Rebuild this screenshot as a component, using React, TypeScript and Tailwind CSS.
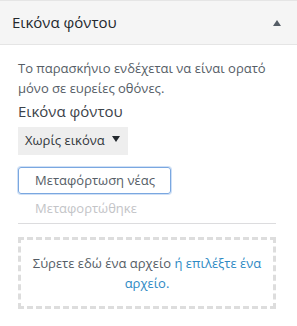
export default function App() {
  return (
    <div
      className="w-[297px] h-[326px] bg-white overflow-hidden"
      style={{ fontFamily: '"Open Sans", "Noto Sans", sans-serif' }}
    >
      <div className="flex items-center justify-between h-[45px] bg-[#f5f5f5] border-t border-b border-[#e5e5e5] pl-[12px] pr-[16px]">
        <span className="text-[15px] text-[#23282d]">Εικόνα φόντου</span>
        <span className="w-0 h-0 border-l-[4px] border-r-[4px] border-b-[6px] border-l-transparent border-r-transparent border-b-[#555d66]" />
      </div>

      <div className="px-[18px] pt-[13px] pr-[21px]">
        <p className="text-[13px] leading-[20px] text-[#555d66]">
          Το παρασκήνιο ενδέχεται να είναι ορατό μόνο σε ευρείες οθόνες.
        </p>
        <div className="mt-[2px] text-[15px] font-medium text-[#3c434a] leading-[22px]">
          Εικόνα φόντου
        </div>
        <div className="mt-[5px] flex items-center w-[110px] h-[28px] bg-[#eeeeee] pl-[7px] pr-[8px] justify-between">
          <span className="text-[13px] text-[#32373c]">Χωρίς εικόνα</span>
          <span className="w-0 h-0 border-l-[4px] border-r-[4px] border-t-[6px] border-l-transparent border-r-transparent border-t-[#23282d] mb-[4px]" />
        </div>
        <div className="mt-[12px] flex items-center w-[153px] h-[27px] border border-[#7aa7e0] rounded-[3px] pl-[16px] shadow-[0_0_0_1px_#cfe0f6]">
          <span className="text-[13px] text-[#555d66]">Μεταφόρτωση νέας</span>
        </div>
        <div className="pl-[17px] mt-[5px] text-[13px] text-[#c3c4c7] leading-[18px]">
          Μεταφορτώθηκε
        </div>
        <div className="mt-[6px] border-t border-[#dcdcde]" />
        <div className="mt-[13px] h-[72px] border-[3px] border-dashed border-[#dddddd] flex items-center justify-center px-[2px]">
          <p className="text-center text-[13px] leading-[20px] text-[#555d66]">
            Σύρετε εδώ ένα αρχείο <span className="text-[#2e8ac4]">ή επιλέξτε ένα αρχείο.</span>
          </p>
        </div>
      </div>
    </div>
  );
}
